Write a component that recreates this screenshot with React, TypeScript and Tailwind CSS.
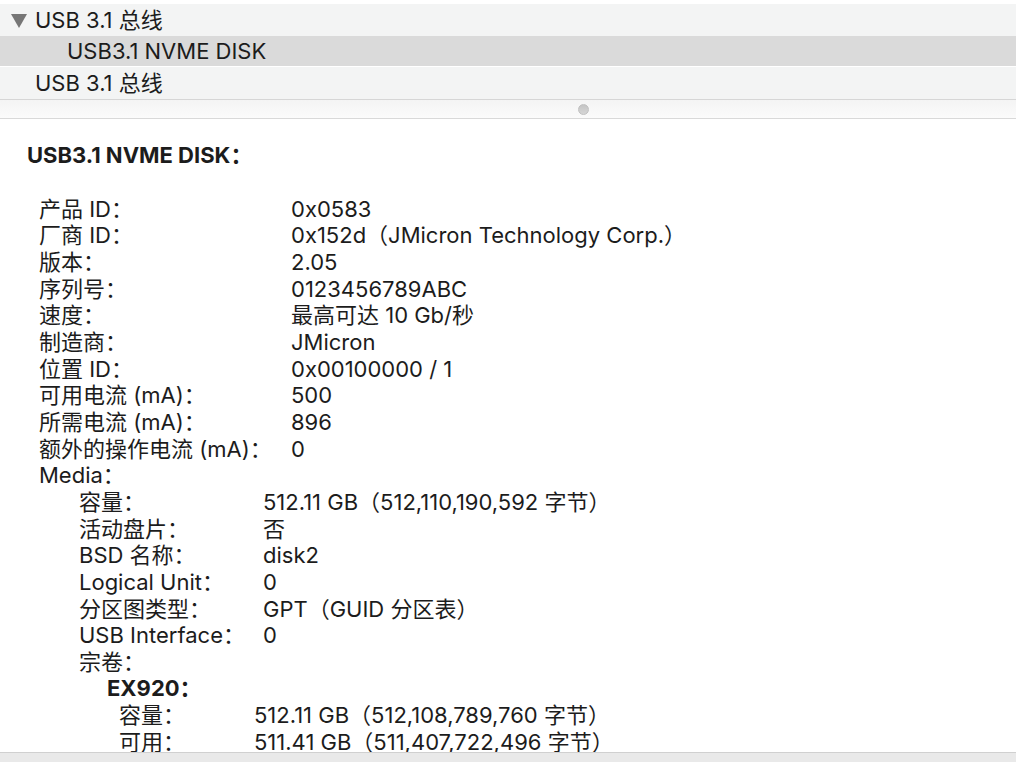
const font = { fontFamily: 'Inter, "Noto Sans CJK SC", sans-serif' };

type Row = { label: string; value?: string };

const deviceRows: Row[] = [
    { label: "产品 ID：", value: "0x0583" },
    { label: "厂商 ID：", value: "0x152d（JMicron Technology Corp.）" },
    { label: "版本：", value: "2.05" },
    { label: "序列号：", value: "0123456789ABC" },
    { label: "速度：", value: "最高可达 10 Gb/秒" },
    { label: "制造商：", value: "JMicron" },
    { label: "位置 ID：", value: "0x00100000 / 1" },
    { label: "可用电流 (mA)：", value: "500" },
    { label: "所需电流 (mA)：", value: "896" },
    { label: "额外的操作电流 (mA)：", value: "0" },
];

const mediaRows: Row[] = [
    { label: "容量：", value: "512.11 GB（512,110,190,592 字节）" },
    { label: "活动盘片：", value: "否" },
    { label: "BSD 名称：", value: "disk2" },
    { label: "Logical Unit：", value: "0" },
    { label: "分区图类型：", value: "GPT（GUID 分区表）" },
    { label: "USB Interface：", value: "0" },
];

const volumeRows: Row[] = [
    { label: "容量：", value: "512.11 GB（512,108,789,760 字节）" },
    { label: "可用：", value: "511.41 GB（511,407,722,496 字节）" },
];

const InfoRows = ({ rows, labelWidth }: { rows: Row[]; labelWidth: string }) => {
    return <div className="flex flex-col">
        {rows.map(r => (
            <div className="flex whitespace-nowrap" key={r.label}>
                <span className={labelWidth}>{r.label}</span>
                <span>{r.value}</span>
            </div>
        ))}
    </div>
}

const App = () => {
    return (
        <div className="w-[1016px] h-[762px] flex flex-col bg-white text-[22px] text-[#1c1c1c] overflow-hidden" style={font}>
            <div className="pt-1 flex flex-col">
                <div className="h-[32px] bg-[#f3f4f4] flex items-center">
                    <svg width="16" height="14" viewBox="0 0 16 14" className="ml-[11px] mr-[8px] mt-[1px]">
                        <polygon points="0,0 16,0 8,14" fill="#767676" />
                    </svg>
                    <span className="mt-[1px]">USB 3.1 总线</span>
                </div>
                <div className="h-[30px] bg-[#dadada] flex items-center pl-[67px]">USB3.1 NVME DISK</div>
                <div className="h-[1px] bg-white" />
                <div className="h-[33px] bg-[#f3f4f4] flex items-center pl-[35px] border-b border-[#d6d6d6]">USB 3.1 总线</div>
            </div>
            <div className="h-[19px] bg-gradient-to-b from-[#f4f4f4] to-[#fbfbfb] border-b border-[#d9d9d9] flex items-center justify-center">
                <div className="w-[11px] h-[11px] rounded-full bg-gradient-to-b from-[#c4c4c4] to-[#d6d6d6] border border-[#c0c0c0] ml-[150px]" />
            </div>
            <div className="flex-1 overflow-hidden pt-[23px] pl-[27px] leading-[26.65px]">
                <div className="font-bold mb-[27px]">USB3.1 NVME DISK：</div>
                <div className="pl-[12px]">
                    <InfoRows rows={deviceRows} labelWidth="w-[252px]" />
                    <div>Media：</div>
                    <div className="pl-[40px]">
                        <InfoRows rows={mediaRows} labelWidth="w-[184px]" />
                        <div>宗卷：</div>
                        <div className="pl-[28px] font-bold">EX920：</div>
                        <div className="pl-[40px]">
                            <InfoRows rows={volumeRows} labelWidth="w-[135px]" />
                        </div>
                    </div>
                </div>
            </div>
            <div className="h-[10px] bg-[#e9e9e9] border-t border-[#d0d0d0]" />
        </div>
    )
}

export default App
